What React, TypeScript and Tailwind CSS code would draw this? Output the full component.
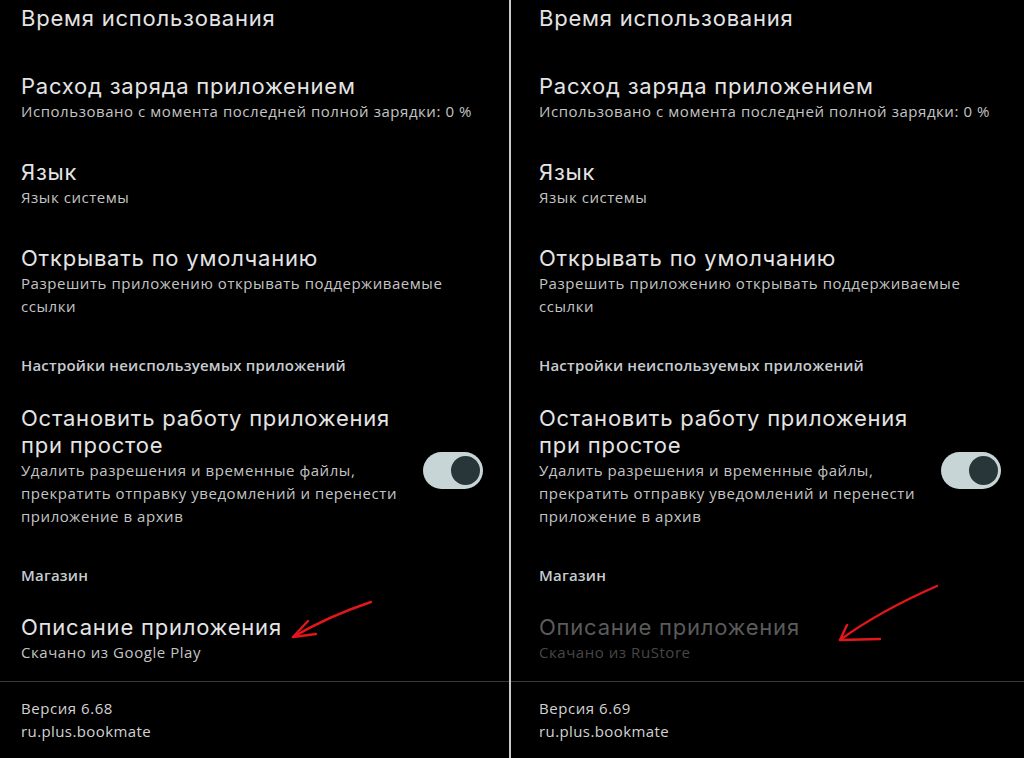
import React from "react";

type PanelProps = {
  version: string;
  store: string;
  storeDisabled?: boolean;
  padLeft: string;
  padRight: string;
};

const font = { fontFamily: "'Open Sans', 'Noto Sans', sans-serif" };
const titleFont = { fontFamily: "Inter, 'Open Sans', sans-serif" };

function Title({ children, dim }: { children: React.ReactNode; dim?: boolean }) {
  return (
    <div
      className={`text-[22px] leading-[27px] tracking-[0.78px] ${
        dim ? "text-[#5b5b5b]" : "text-[#e4e4e4]"
      }`}
      style={titleFont}
    >
      {children}
    </div>
  );
}

function Sub({ children, dim }: { children: React.ReactNode; dim?: boolean }) {
  return (
    <div
      className={`text-[15px] leading-[22.5px] tracking-[0.55px] ${
        dim ? "text-[#474747]" : "text-[#c4c4c4]"
      }`}
    >
      {children}
    </div>
  );
}

function Header({ children }: { children: React.ReactNode }) {
  return (
    <div className="text-[15px] leading-[22px] font-semibold tracking-[0.2px] text-[#c7ccd0]">
      {children}
    </div>
  );
}

function Toggle() {
  return (
    <div className="flex h-[37px] w-[60px] items-center justify-end rounded-full bg-[#c8d5d6] pr-[3px]">
      <div className="h-[29px] w-[29px] rounded-full bg-[#28363a]" />
    </div>
  );
}

function Panel({ version, store, storeDisabled, padLeft, padRight }: PanelProps) {
  return (
    <div className="flex h-full flex-col">
      <div className={`flex flex-col ${padLeft} ${padRight}`}>
        <div className="mt-[5px]">
          <Title>Время использования</Title>
        </div>

        <div className="mt-[41px]">
          <Title>Расход заряда приложением</Title>
          <Sub>Использовано с момента последней полной зарядки: 0 %</Sub>
        </div>

        <div className="mt-[36px]">
          <Title>Язык</Title>
          <Sub>Язык системы</Sub>
        </div>

        <div className="mt-[37px]">
          <Title>Открывать по умолчанию</Title>
          <Sub>
            Разрешить приложению открывать поддерживаемые
            <br />
            ссылки
          </Sub>
        </div>

        <div className="mt-[37px]">
          <Header>Настройки неиспользуемых приложений</Header>
        </div>

        <div className="mt-[29px] flex items-center justify-between">
          <div>
            <Title>
              Остановить работу приложения
              <br />
              при простое
            </Title>
            <div className="text-[15px] leading-[23px] tracking-[0.55px] text-[#c4c4c4]">
              Удалить разрешения и временные файлы,
              <br />
              прекратить отправку уведомлений и перенести
              <br />
              приложение в архив
            </div>
          </div>
          <div className="pt-[8px]">
            <Toggle />
          </div>
        </div>

        <div className="mt-[36px]">
          <Header>Магазин</Header>
        </div>

        <div className="mt-[28px]">
          <Title dim={storeDisabled}>Описание приложения</Title>
          <Sub dim={storeDisabled}>{store}</Sub>
        </div>
      </div>

      <div className="mt-[17px] h-px w-full bg-[#383838]" />

      <div className={`mt-[15px] ${padLeft}`}>
        <div className="text-[15px] leading-[23px] tracking-[0.55px] text-[#d2d2d2]">
          {version}
        </div>
        <div className="text-[15px] leading-[23px] tracking-[0.4px] text-[#d2d2d2]">
          ru.plus.bookmate
        </div>
      </div>
    </div>
  );
}

export default function App() {
  return (
    <div
      className="relative flex h-[758px] w-[1024px] overflow-hidden bg-black antialiased"
      style={font}
    >
      <div className="h-full w-[509px]">
        <Panel
          version="Версия 6.68"
          store="Скачано из Google Play"
          padLeft="pl-[21px]"
          padRight="pr-[26px]"
        />
      </div>

      {/* вертикальный разделитель между скриншотами */}
      <div className="relative z-10 h-full w-[2px] bg-[#c9c9c9]" />

      <div className="h-full flex-1">
        <Panel
          version="Версия 6.69"
          store="Скачано из RuStore"
          storeDisabled
          padLeft="pl-[28px]"
          padRight="pr-[23px]"
        />
      </div>

      {/* красные стрелки поверх */}
      <svg
        className="pointer-events-none absolute left-0 top-0"
        width="1024"
        height="758"
        viewBox="0 0 1024 758"
        fill="none"
        stroke="#e3161b"
        strokeWidth="2.4"
        strokeLinecap="round"
        strokeLinejoin="round"
      >
        <path d="M371 602 C350 609 322 620 293 637" />
        <path d="M308 621 L293 637 L316 634" />
        <path d="M937 586 C905 600 870 618 840 640" />
        <path d="M847 625 L840 640 L880 639" />
      </svg>
    </div>
  );
}
